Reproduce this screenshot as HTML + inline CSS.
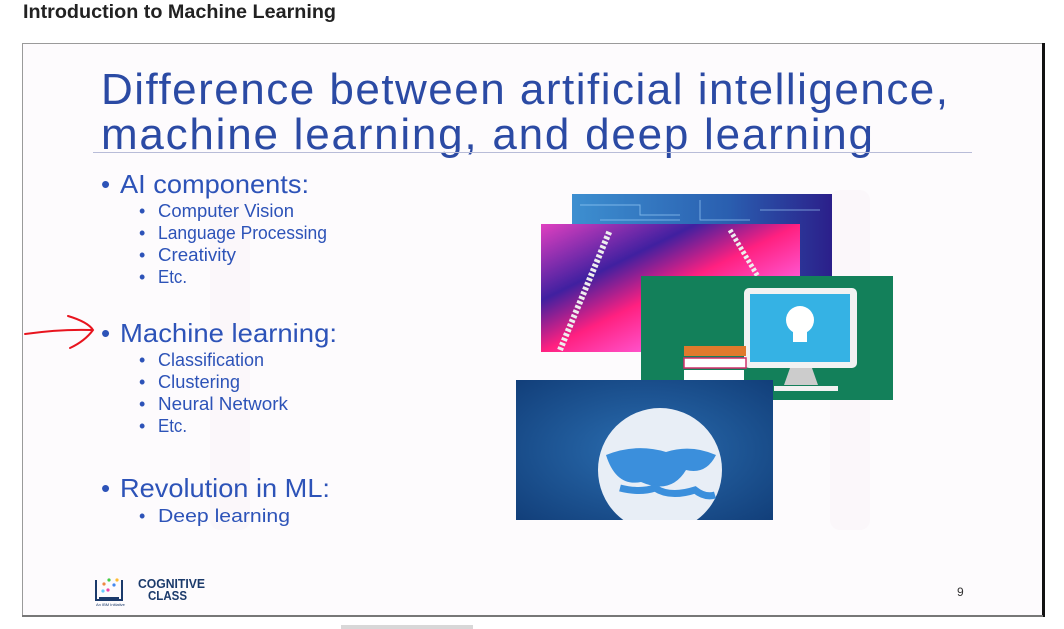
<!DOCTYPE html>
<html><head><meta charset="utf-8"><style>
html,body{margin:0;padding:0;width:1064px;height:629px;overflow:hidden;background:#fff;font-family:"Liberation Sans",sans-serif}
</style></head><body>
<svg width="1064" height="629" viewBox="0 0 1064 629" xmlns="http://www.w3.org/2000/svg" style="position:absolute;left:0;top:0">
<defs>
<linearGradient id="c1" x1="0" y1="0" x2="1" y2="0"><stop offset="0" stop-color="#3d8fd0"/><stop offset="0.6" stop-color="#2a5fb0"/><stop offset="1" stop-color="#2b1f8a"/></linearGradient>
<linearGradient id="c2" x1="0" y1="0" x2="1" y2="1"><stop offset="0" stop-color="#e040c0"/><stop offset="0.3" stop-color="#4020a0"/><stop offset="0.5" stop-color="#ff2080"/><stop offset="0.75" stop-color="#ff60e0"/><stop offset="1" stop-color="#8040ff"/></linearGradient>
<radialGradient id="g1" cx="0.5" cy="0.5" r="0.7"><stop offset="0" stop-color="#2a6db0"/><stop offset="1" stop-color="#123f7a"/></radialGradient>
<clipPath id="gc"><rect x="516" y="380" width="257" height="140"/></clipPath>
</defs>
<text x="23" y="18" font-size="19" font-weight="bold" fill="#222" textLength="313" lengthAdjust="spacingAndGlyphs">Introduction to Machine Learning</text>
<rect x="22.5" y="43.5" width="1020" height="573" fill="#fdfbfd" stroke="#9a9a9a" stroke-width="1"/>
<rect x="1042" y="43" width="3" height="574" fill="#111"/>
<rect x="22" y="615" width="1021" height="2" fill="#777"/>
<g opacity="0.02" fill="#a03060"><rect x="210" y="190" width="40" height="340" rx="10"/><rect x="830" y="190" width="40" height="340" rx="10"/></g>
<text x="101" y="104" font-size="44" fill="#2b4aa4" textLength="847" lengthAdjust="spacing">Difference between artificial intelligence,</text>
<text x="101" y="149" font-size="44" fill="#2b4aa4" textLength="772" lengthAdjust="spacing">machine learning, and deep learning</text>
<rect x="93" y="152" width="879" height="1" fill="#b8bcd8"/>
<g fill="#2d53b8">
<text x="101" y="193" font-size="26">•</text>
<text x="120" y="193" font-size="26" textLength="189" lengthAdjust="spacingAndGlyphs">AI components:</text>
<g font-size="18">
<text x="139" y="217">•</text><text x="158" y="217" textLength="136" lengthAdjust="spacingAndGlyphs">Computer Vision</text>
<text x="139" y="239">•</text><text x="158" y="239" textLength="169" lengthAdjust="spacingAndGlyphs">Language Processing</text>
<text x="139" y="261">•</text><text x="158" y="261" textLength="78" lengthAdjust="spacingAndGlyphs">Creativity</text>
<text x="139" y="283">•</text><text x="158" y="283" textLength="29" lengthAdjust="spacingAndGlyphs">Etc.</text>
</g>
<text x="101" y="342" font-size="26">•</text>
<text x="120" y="342" font-size="26" textLength="217" lengthAdjust="spacingAndGlyphs">Machine learning:</text>
<g font-size="18">
<text x="139" y="366">•</text><text x="158" y="366" textLength="106" lengthAdjust="spacingAndGlyphs">Classification</text>
<text x="139" y="388">•</text><text x="158" y="388" textLength="82" lengthAdjust="spacingAndGlyphs">Clustering</text>
<text x="139" y="410">•</text><text x="158" y="410" textLength="130" lengthAdjust="spacingAndGlyphs">Neural Network</text>
<text x="139" y="432">•</text><text x="158" y="432" textLength="29" lengthAdjust="spacingAndGlyphs">Etc.</text>
</g>
<text x="101" y="497" font-size="26">•</text>
<text x="120" y="497" font-size="26" textLength="210" lengthAdjust="spacingAndGlyphs">Revolution in ML:</text>
<text x="139" y="522" font-size="18">•</text><text x="158" y="522" font-size="18" textLength="132" lengthAdjust="spacingAndGlyphs">Deep learning</text>
</g>
<path d="M25 334 Q60 329 92 330 M68 316 Q88 322 93 330 Q85 341 70 348" fill="none" stroke="#e8141e" stroke-width="2" stroke-linecap="round"/>
<rect x="572" y="194" width="260" height="84" fill="url(#c1)"/>
<g stroke="#a8d8ff" stroke-width="1" opacity="0.6" fill="none"><path d="M580 205h60v10h40M700 200v20h50M760 210h60M600 220h80"/></g>
<rect x="541" y="224" width="259" height="128" fill="url(#c2)"/>
<path d="M560 350 L610 230" stroke="#eee" stroke-width="6" stroke-dasharray="3 2"/>
<path d="M730 230 L760 280" stroke="#eee" stroke-width="5" stroke-dasharray="3 2"/>
<rect x="641" y="276" width="252" height="124" fill="#13805a"/>
<rect x="744" y="288" width="113" height="80" rx="5" fill="#f2f2f2"/>
<rect x="750" y="294" width="100" height="68" fill="#35b2e4"/>
<circle cx="800" cy="320" r="14" fill="#fff"/>
<rect x="793" y="332" width="14" height="10" fill="#fff"/>
<path d="M790 368h22l6 17h-34z" fill="#ccc"/>
<rect x="774" y="386" width="64" height="5" fill="#f2f2f2"/>
<rect x="684" y="346" width="62" height="10" fill="#e07a2c"/>
<rect x="684" y="358" width="62" height="10" fill="#fff" stroke="#d0306a" stroke-width="1.5"/>
<rect x="684" y="370" width="60" height="10" fill="#fff"/>
<rect x="516" y="380" width="257" height="140" fill="url(#g1)"/>
<g clip-path="url(#gc)">
<circle cx="660" cy="470" r="62" fill="#e8eef6"/>
<path d="M606 455 q30-12 60-3 q25-8 50 3 q-10 20-30 15 q-15 25-45 12 q-25 5-35-27z" fill="#3b8fdc"/>
<path d="M620 488 q20 5 35 0 q15 10 40 2 q10 8 20 5" stroke="#3b8fdc" stroke-width="7" fill="none"/>
</g>
<g>
<path d="M96 580v20h26v-20M99 598h20" fill="none" stroke="#1b3a6b" stroke-width="2"/>
<circle cx="104" cy="584" r="1.6" fill="#e84"/><circle cx="109" cy="580" r="1.6" fill="#4c4"/><circle cx="114" cy="585" r="1.6" fill="#48e"/><circle cx="108" cy="590" r="1.6" fill="#e4a"/><circle cx="117" cy="580" r="1.6" fill="#fb3"/><circle cx="103" cy="591" r="1.6" fill="#6cf"/>
<text x="138" y="588" font-size="13" font-weight="bold" fill="#1b3a6b" textLength="67" lengthAdjust="spacingAndGlyphs">COGNITIVE</text>
<text x="148" y="600" font-size="13" font-weight="bold" fill="#1b3a6b" textLength="39" lengthAdjust="spacingAndGlyphs">CLASS</text>
<text x="96" y="606" font-size="4" fill="#1b3a6b">An IBM Initiative</text>
</g>
<text x="957" y="596" font-size="12" fill="#333">9</text>
<rect x="341" y="625" width="132" height="4" fill="#d8d8d8"/>
</svg>
</body></html>
